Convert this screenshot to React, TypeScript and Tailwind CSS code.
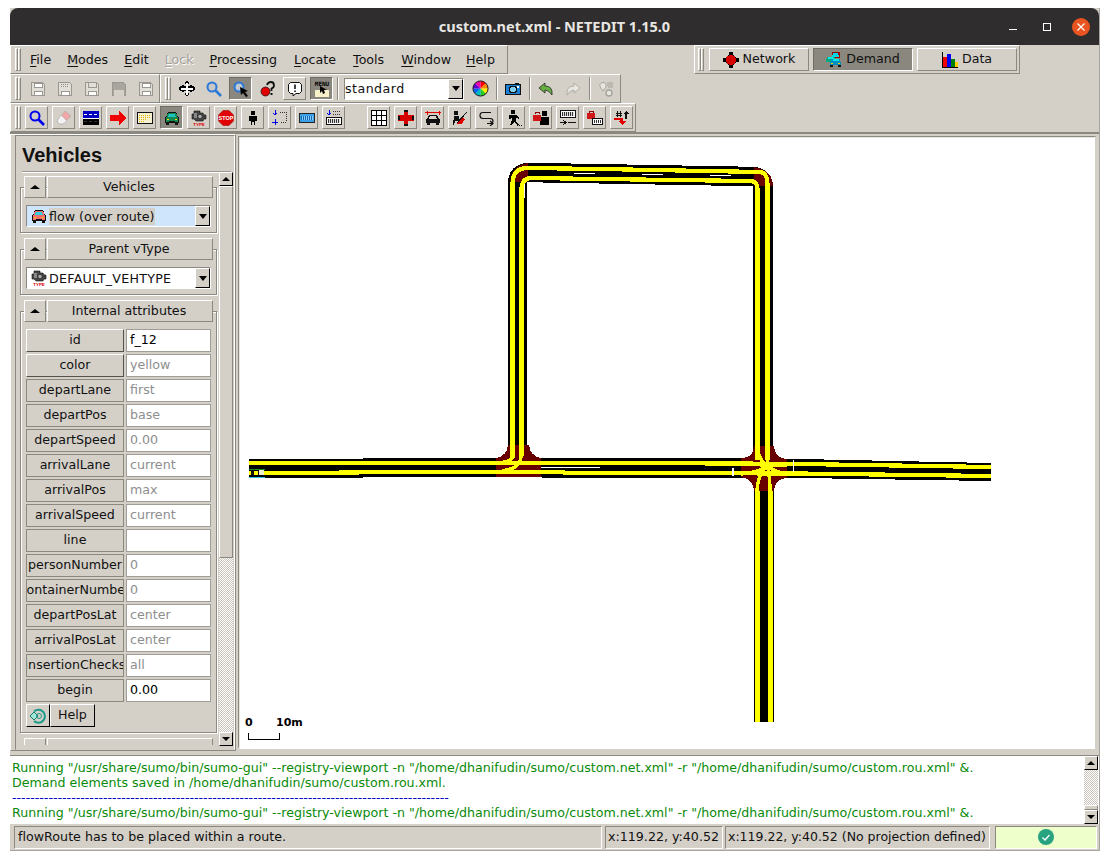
import React from "react";

const raised = "border border-t-white border-l-white border-b-[#8b8880] border-r-[#8b8880]";
const sunken = "border border-t-[#8b8880] border-l-[#8b8880] border-b-white border-r-white";

function Ico({ children }: { children: React.ReactNode }) {
  return (
    <svg viewBox="0 0 16 16" width={16} height={16} shapeRendering="crispEdges" className="block shrink-0">
      {children}
    </svg>
  );
}

function Grip({ className = "" }: { className?: string }) {
  return (
    <div className={`flex h-[23px] w-[6px] shrink-0 gap-0 ${className}`}>
      <div className={`w-[3px] ${raised}`} />
      <div className={`w-[3px] ${raised}`} />
    </div>
  );
}

function Btn({ children, pressed, flat, className = "" }: { children: React.ReactNode; pressed?: boolean; flat?: boolean; className?: string }) {
  const look = pressed
    ? "border border-t-[#6f6c66] border-l-[#6f6c66] border-b-white border-r-white bg-[#8a877f]"
    : flat
      ? "border border-transparent"
      : raised;
  return <div className={`flex h-[23px] w-[23px] shrink-0 items-center justify-center ${look} ${className}`}>{children}</div>;
}

function Sep({ className = "" }: { className?: string }) {
  return <div className={`h-[23px] w-[2px] shrink-0 border-l border-l-[#8b8880] border-r border-r-white ${className}`} />;
}

function Floppy({ v }: { v: number }) {
  return (
    <Ico>
      <path d="M1.5 1.5h11l2 2v11h-13z" fill={v === 3 ? "#a9a69f" : "#e2dfd8"} stroke="#9a9790" />
      {v === 0 || v === 4 ? <rect x="4" y="2" width="8" height="4" fill="#fff" stroke="#9a9790" /> : null}
      {v === 1 ? <path d="M4 3h8M4 5h8" stroke="#8f8c85" strokeDasharray="1 1" /> : null}
      {v === 2 ? <path d="M4 2v4h8V2" fill="none" stroke="#9a9790" /> : null}
      {v === 3 ? <rect x="3" y="9" width="10" height="6" fill="#d4d0c8" /> : <rect x="4" y="10" width="8" height="4" fill="#fff" stroke="#9a9790" />}
    </Ico>
  );
}

function Glass({ stroke = "#0000f0", lens = "none", w = 2 }: { stroke?: string; lens?: string; w?: number }) {
  return (
    <svg viewBox="0 0 16 16" width={16} height={16} className="block shrink-0">
      <circle cx="6" cy="6" r="4.5" fill={lens} stroke={stroke} strokeWidth={w} />
      <path d="M9.5 9.5 15 15" stroke={stroke} strokeWidth={w + 0.7} />
    </svg>
  );
}

function Car({ body = "#108a50", glass = "#20c0c0" }: { body?: string; glass?: string }) {
  return (
    <Ico>
      <path d="M4 2h8l2 5h1v6h-1v2h-3v-2H5v2H2v-2H1V7h1z" fill="#111" />
      <path d="M4 3h8l2 5v4H2V8z" fill={body} />
      <path d="M5 4h6l1 3H4z" fill={glass} />
      <rect x="3" y="9" width="2" height="1" fill="#ffd000" />
      <rect x="11" y="9" width="2" height="1" fill="#ffd000" />
      <rect x="5" y="11" width="6" height="1" fill="#111" />
    </Ico>
  );
}

function Engine() {
  return (
    <svg viewBox="0 0 16 16" width={16} height={16} className="block shrink-0">
      <path d="M3 1h6v2h3l1 2h2v4h-2l-1 2H5L3 9H1V4h2z" fill="#444" stroke="#111" strokeWidth=".6" />
      <circle cx="9" cy="6.5" r="2.2" fill="#aaa" stroke="#111" strokeWidth=".6" />
      <rect x="3" y="3" width="3" height="5" fill="#888" />
      <text x="8" y="16" textAnchor="middle" fontSize="4.4" fontWeight="700" fill="#e00000" fontFamily="Liberation Sans">TYPE</text>
    </svg>
  );
}

function RedCross() {
  return (
    <Ico>
      <path d="M6 0h4v5h6v6h-6v5H6v-5H0V5h6z" fill="#d40000" />
      <path d="M6 0h4v2H6zM6 14h4v2H6zM0 6h2v4H0zM14 6h2v4h-2z" fill="#111" />
    </Ico>
  );
}

function Person({ color = "#000" }: { color?: string }) {
  return (
    <Ico>
      <rect x="6" y="1" width="4" height="4" fill={color} />
      <path d="M4 6h8v5h-2v4H9v-3H7v3H6v-4H4z" fill={color} />
    </Ico>
  );
}

function Wheel() {
  const cols = ["#ff0000", "#ff8800", "#ffee00", "#22cc22", "#00bbbb", "#0066ff", "#6600cc", "#ee00aa"];
  return (
    <svg viewBox="0 0 18 18" width={17} height={17} className="block">
      {cols.map((c, i) => {
        const a = (i * Math.PI) / 4 - Math.PI / 2;
        const b = ((i + 1) * Math.PI) / 4 - Math.PI / 2;
        return (
          <path
            key={c}
            d={`M9 9 L${9 + 8 * Math.cos(a)} ${9 + 8 * Math.sin(a)} A8 8 0 0 1 ${9 + 8 * Math.cos(b)} ${9 + 8 * Math.sin(b)} Z`}
            fill={c}
          />
        );
      })}
      <circle cx="9" cy="9" r="8" fill="none" stroke="#111" />
    </svg>
  );
}

function Combo({ w, text, icon, field = "bg-white", textBg = "" }: { w: string; text: string; icon?: React.ReactNode; field?: string; textBg?: string }) {
  return (
    <div className={`flex h-[22px] items-center ${sunken} ${field} ${w}`}>
      {icon ? <div className="ml-[4px] mr-[2px]">{icon}</div> : null}
      <span className={`whitespace-nowrap leading-[17px] ${textBg}`}>{text}</span>
      <div className="ml-auto flex h-[20px] w-[15px] items-center justify-center border border-t-white border-l-white border-b-black border-r-black bg-[#d4d0c8]">
        <div className="h-0 w-0 border-x-[4px] border-t-[5px] border-x-transparent border-t-black" />
      </div>
    </div>
  );
}

function ArrowBtn({ up, className = "" }: { up?: boolean; className?: string }) {
  return (
    <div className={`flex h-[14px] w-[14px] shrink-0 items-center justify-center border border-t-white border-l-white border-b-black border-r-black bg-[#d4d0c8] ${className}`}>
      <div className={`h-0 w-0 border-x-[4px] border-x-transparent ${up ? "border-b-[4px] border-b-black" : "border-t-[4px] border-t-black"}`} />
    </div>
  );
}

function Module({ title, children, clipped }: { title: string; children?: React.ReactNode; clipped?: boolean }) {
  return (
    <div className="w-[197px]">
      <div className="relative z-10 mx-[4px] flex h-[22px]">
        <div className={`flex h-[22px] w-[22px] items-center justify-center bg-[#d4d0c8] ${raised}`}>
          <div className="h-0 w-0 border-x-[5px] border-b-[4px] border-x-transparent border-b-black" />
        </div>
        <div className={`ml-px flex h-[22px] w-[166px] items-center justify-center bg-[#d4d0c8] pr-[2px] ${raised}`}>{title}</div>
      </div>
      {clipped ? null : (
        <div className="-mt-[11px] border border-[#8b8880] bg-[#d4d0c8] px-[5px] pb-[5px] pt-[17px] shadow-[1px_1px_0_#fff,inset_1px_1px_0_#fff]">{children}</div>
      )}
    </div>
  );
}

function AttrRow({ label, value, active, raisedLabel }: { label: string; value: string; active?: boolean; raisedLabel?: boolean }) {
  return (
    <div className="flex h-[23px] gap-[2px]">
      <div
        className={`flex h-[23px] w-[98px] items-center justify-center overflow-hidden whitespace-nowrap border ${
          raisedLabel ? "border-t-white border-l-white border-b-[#55534e] border-r-[#55534e]" : "border-[#8b8880]"
        }`}
      >
        <span className="shrink-0">{label}</span>
      </div>
      <div className={`flex h-[23px] w-[85px] items-center border border-[#a09d96] bg-white px-[3px] ${active ? "text-black" : "text-[#8e8e8e]"}`}>{value}</div>
    </div>
  );
}

function Scroll({ thumbTop, thumbH, h, className = "" }: { thumbTop: number; thumbH: string; h: string; className?: string }) {
  return (
    <div className={`flex shrink-0 flex-col ${h} ${className}`}>
      <ArrowBtn up />
      <div className="flex min-h-0 flex-1 flex-col bg-[repeating-conic-gradient(#ffffff_0_25%,#c8c4bc_0_50%)] bg-[length:2px_2px]">
        <div style={{ height: thumbTop }} />
        <div className={`${thumbH} bg-[#d4d0c8] ${raised}`} />
      </div>
      <ArrowBtn />
    </div>
  );
}

function Roads() {
  const Y = "#ffff00";
  const R = "#680000";
  return (
    <svg viewBox="240 138 854 610" width={854} height={610} className="block bg-white" shapeRendering="crispEdges">
      <polygon points="249,459 480,458 740,458 800,459 991,463 991,481 800,478 603,478 480,477 249,478" fill="#000" />
      <path d="M517.5 460V184Q517.5 172.5 529 172.5L752 176.5Q763 176.5 763 188V460" fill="none" stroke="#000" strokeWidth="19.5" />
      <rect x="754" y="478" width="20" height="244" fill="#000" />
      <path d="M510 184Q510 166 528 163V182H510Z" fill={R} />
      <path d="M754 167Q773 170 773 186H754Z" fill={R} />
      <path d="M496 477H541V458Q530 456 529 445H508Q507 456 496 458Z" fill={R} />
      <path d="M754 446H774Q775 458 787 459V478Q775 479 774 491H754Q753 479 741 477V458Q753 458 754 446Z" fill={R} />
      <g fill="none" stroke={Y} strokeWidth="4.2">
        <path d="M249 463H555L740 463.5 800 464 991 467" />
        <path d="M249 473H300L400 472H558L570 473 800 473.5 991 476" />
        <path d="M512.5 458V184Q512.5 168 528 168L600 169 760 172Q767.5 172 767.5 186V460" />
        <path d="M521.5 456V189Q521.5 178 532 178L600 179 750 181Q757.5 181 757.5 189V460" />
        <path d="M757.5 491V722M770.5 491V722" />
      </g>
      <g fill="none" stroke={Y} strokeWidth="3.4">
        <path d="M513 456Q512 462 497 463" />
        <path d="M521 456Q521 466 510 469T497 473" />
        <path d="M757 446Q759 462 769 467" />
        <path d="M767 446Q767 458 768 468" />
        <path d="M741 463Q758 463 768 467" />
        <path d="M741 474Q760 472 769 465" />
        <path d="M787 465Q774 465 766 467" />
        <path d="M787 474Q774 472 766 465" />
        <path d="M757 491Q757 476 768 464" />
        <path d="M770 491Q770 476 767 464" />
      </g>
      <g fill="#fff">
        <rect x="541" y="467" width="59" height="1" />
        <rect x="574" y="173" width="21" height="1" />
        <rect x="642" y="174" width="21" height="1" />
        <rect x="710" y="175" width="21" height="1" />
        <rect x="524" y="184" width="1" height="14" />
        <rect x="732" y="468" width="2" height="8" />
        <rect x="793" y="460" width="1" height="12" />
      </g>
      <rect x="249" y="469" width="16" height="1" fill="#1a8a1a" />
      <rect x="251" y="470" width="3" height="5" fill="#111" />
      <rect x="258" y="470" width="1" height="5" fill="#111" />
      <rect x="259" y="470" width="5" height="5" fill="#f0f0d0" />
      <rect x="249" y="477" width="16" height="1" fill="#30c0e0" />
      <g fill="#000" fontFamily="DejaVu Sans" fontSize="11" fontWeight="700" shapeRendering="auto">
        <text x="245" y="726">0</text>
        <text x="276" y="726">10m</text>
      </g>
      <path d="M248.5 733V739.5H279.5V733" fill="none" stroke="#000" />
    </svg>
  );
}

const attrs: [string, string, boolean?, boolean?][] = [
  ["id", "f_12", true, true],
  ["color", "yellow", false, true],
  ["departLane", "first"],
  ["departPos", "base"],
  ["departSpeed", "0.00"],
  ["arrivalLane", "current"],
  ["arrivalPos", "max"],
  ["arrivalSpeed", "current"],
  ["line", "", true],
  ["personNumber", "0"],
  ["containerNumber", "0"],
  ["departPosLat", "center"],
  ["arrivalPosLat", "center"],
  ["insertionChecks", "all"],
  ["begin", "0.00", true],
];

const menus: [string, string, string, boolean?][] = [
  ["F", "ile", "ml-[9px]"],
  ["M", "odes", "ml-[16px]"],
  ["E", "dit", "ml-[16px]"],
  ["L", "ock", "ml-[16px] text-[#a5a29b] [text-shadow:1px_1px_0_#fff]", true],
  ["P", "rocessing", "ml-[16px]"],
  ["L", "ocate", "ml-[17px]"],
  ["T", "ools", "ml-[17px]"],
  ["W", "indow", "ml-[17px]"],
  ["H", "elp", "ml-[15px]"],
];

export default function App() {
  return (
    <div className="h-[861px] w-[1109px] overflow-hidden bg-white pl-[10px] pt-[8px] font-['DejaVu_Sans',sans-serif] text-[12.65px] leading-none text-[#111]">
      <div className="flex h-[843px] w-[1090px] flex-col border-r border-r-[#a8a59e] border-b border-b-[#a8a59e] bg-[#d4d0c8]">
        <div className="grid h-[37px] shrink-0 grid-cols-[120px_1fr_120px] items-center rounded-t-[8px] bg-[#2f2d2d]">
          <div />
          <div className="text-center font-['Noto_Sans',sans-serif] text-[14.5px] font-bold text-[#e8e6e3]">custom.net.xml - NETEDIT 1.15.0</div>
          <div className="flex items-center justify-end pr-[9px]">
            <div className="mt-[6px] h-px w-[8px] bg-white" />
            <div className="ml-[26px] h-[8px] w-[8px] border border-white" />
            <div className="ml-[21px] flex h-[18px] w-[18px] items-center justify-center rounded-full bg-[#e95420]">
              <svg viewBox="0 0 10 10" width={10} height={10}>
                <path d="M1.5 1.5l7 7M8.5 1.5l-7 7" stroke="#fff" strokeWidth="1.2" />
              </svg>
            </div>
          </div>
        </div>

        {/* menu + supermodes */}
        <div className="flex h-[29px] shrink-0">
          <div className={`flex h-[29px] w-[498px] items-center pl-[4px] ${raised}`}>
            <Grip />
            {menus.map(([u, rest, ml]) => (
              <span key={rest} className={`${ml} pt-[2px]`}>
                <span className="underline underline-offset-2">{u}</span>
                {rest}
              </span>
            ))}
          </div>
          <div className={`ml-[186px] flex h-[29px] w-[326px] items-center gap-[4px] pl-[3px] ${raised}`}>
            <Grip className="mr-[1px]" />
            <div className={`flex h-[23px] w-[100px] items-center justify-center gap-[4px] ${raised}`}>
              <Ico><path d="M6 0h4v3h1v1h1v1h1v1h3v4h-3v1h-1v1h-1v1h-1v3H6v-3H5v-1H4v-1H3v-1H0V6h3V5h1V4h1V3h1z" fill="#000" /><circle cx="8" cy="8" r="5.2" fill="#d40000" /></Ico>
              <span>Network</span>
            </div>
            <div className="flex h-[23px] w-[100px] items-center justify-center gap-[4px] border border-t-[#6f6c66] border-l-[#6f6c66] border-b-white border-r-white bg-[#8a877f]">
              <Ico>
                <path d="M6 0h8v6H6z" fill="#900" />
                <path d="M7 1h5l1 4H6z" fill="#00d8e8" />
                <path d="M1 5h8l1 5H0z" fill="#00a880" />
                <path d="M2 5h5l1 2H2z" fill="#00e8e8" />
                <path d="M5 7h9l1 6H4z" fill="#0090c0" />
                <path d="M7 7h6v2H7z" fill="#00e8e8" />
                <rect x="4" y="13" width="3" height="2" fill="#111" />
                <rect x="12" y="13" width="3" height="2" fill="#111" />
                <rect x="5" y="11" width="2" height="1" fill="#ffd000" />
                <rect x="12" y="11" width="2" height="1" fill="#ffd000" />
              </Ico>
              <span>Demand</span>
            </div>
            <div className={`flex h-[23px] w-[100px] items-center justify-center gap-[4px] ${raised}`}>
              <Ico>
                <rect x="1" y="5" width="4" height="10" fill="#f00000" />
                <rect x="5" y="2" width="4" height="13" fill="#0000f0" />
                <rect x="9" y="7" width="4" height="8" fill="#008000" />
                <rect x="13" y="10" width="3" height="5" fill="#ffd000" />
                <path d="M.5 0v15.5H16" fill="none" stroke="#000" />
              </Ico>
              <span>Data</span>
            </div>
          </div>
        </div>

        {/* toolbar row */}
        <div className="flex h-[29px] shrink-0">
          <div className={`flex h-[29px] w-[150px] items-center pl-[4px] ${raised}`}>
            <Grip />
            <div className="ml-[5px] flex gap-[4px]">
              {[0, 1, 2, 3, 4].map((v) => (
                <Btn key={v} flat>
                  <Floppy v={v} />
                </Btn>
              ))}
            </div>
          </div>
          <div className={`flex h-[29px] w-[461px] items-center pl-[4px] ${raised}`}>
            <Grip />
            <div className="ml-[4px] flex gap-[4px]">
              <Btn flat>
                <Ico>
                  <path d="M6 1h1V0h2v1h1v2H9v2h2V4h2v1h2v1h1v3h-1v1h-2v1h-2v-1H9v2h1v2H9v1H7v-1H6v-2h1v-2H5v1H3v-1H1V9H0V6h1V5h2V4h2v1h2V3H6z" fill="#000" />
                  <path d="M7 2h2v5h5v2H9v5H7V9H2V7h5z" fill="#fff" />
                </Ico>
              </Btn>
              <Btn flat>
                <Glass stroke="#2a78d8" lens="#c8c8c8" />
              </Btn>
              <Btn pressed>
                <svg viewBox="0 0 16 16" width={16} height={16} className="block">
                  <circle cx="6" cy="6" r="4.5" fill="#c0c8d0" stroke="#2a78d8" strokeWidth="2" />
                  <path d="M7 6l8 4-3 1 3 4-2 1-3-4-2 2z" fill="#000" />
                </svg>
              </Btn>
              <Btn flat>
                <svg viewBox="0 0 16 16" width={16} height={16} className="block">
                  <circle cx="5.5" cy="10.5" r="4.5" fill="#e00000" stroke="#111" strokeWidth=".7" />
                  <path d="M7 4Q8 1 11 1T14 4.5Q14 6.5 11.5 7.5V10" fill="none" stroke="#111" strokeWidth="1.8" />
                  <rect x="10.5" y="12" width="2" height="2" fill="#111" />
                </svg>
              </Btn>
              <Btn>
                <svg viewBox="0 0 16 16" width={16} height={16} className="block">
                  <path d="M3.500 1.500h9l2 2v7l-2 2H9l-3 2.500v-2.500H3.500l-2-2v-7z" fill="#fff" stroke="#111" />
                  <path d="M8 3.500v4.500M8 9.500v1.500" stroke="#111" strokeWidth="1.600" />
                </svg>
              </Btn>
              <Btn pressed>
                <svg viewBox="0 0 18 18" width={18} height={18} className="block">
                  <text x="9" y="6" textAnchor="middle" fontSize="6" fontWeight="700" fill="#000" fontFamily="DejaVu Sans Mono">MENU</text>
                  <rect x="2" y="10" width="14" height="7" fill="#f8f0c8" />
                  <path d="M7 6l0 7 2-2 1 3 2-1-1-3h3z" fill="#000" />
                </svg>
              </Btn>
            </div>
            <Sep className="ml-[4px]" />
            <div className="ml-[5px]">
              <Combo w="w-[120px]" text="standard" textBg="tracking-[0.45px]" />
            </div>
            <div className="flex h-[23px] w-[32px] items-center justify-center">
              <Wheel />
            </div>
            <Sep />
            <div className="ml-[3px] flex">
              <Btn flat>
                <Ico>
                  <path d="M0 3h9l1-1h3l1 1h2v11H0z" fill="#111" />
                  <path d="M1 4h14v9H1z" fill="#1c7fd6" />
                  <circle cx="8" cy="8.500" r="3.500" fill="#7fd0f0" stroke="#111" />
                  <rect x="12" y="5" width="2" height="2" fill="#fff" />
                </Ico>
              </Btn>
            </div>
            <Sep className="ml-[5px]" />
            <div className="ml-[3px] flex gap-[4px]">
              <Btn flat>
                <svg viewBox="0 0 16 16" width={16} height={16} className="block">
                  <path d="M7 2 1 7l6 5V9Q11 9 14 14 15 5 7 5z" fill="#66b042" stroke="#222" strokeWidth=".8" />
                </svg>
              </Btn>
              <Btn flat>
                <svg viewBox="0 0 16 16" width={16} height={16} className="block">
                  <path d="M9 2l6 5-6 5V9Q5 9 2 14 1 5 9 5z" fill="#e8e6e0" stroke="#a5a29b" strokeWidth=".8" />
                </svg>
              </Btn>
            </div>
            <Sep className="ml-[5px]" />
            <div className="ml-[3px]">
              <Btn flat>
                <svg viewBox="0 0 16 16" width={16} height={16} className="block">
                  <path d="M5 10Q1 5 2 3.500T5 1.500 8 3.500 5 10z" fill="#e8e6e0" stroke="#a5a29b" />
                  <path d="M9 2h6M9 4h6M10 6h5" stroke="#a5a29b" />
                  <circle cx="11" cy="12" r="3" fill="#e8e6e0" stroke="#a5a29b" strokeWidth="1.400" />
                </svg>
              </Btn>
            </div>
          </div>
        </div>

        {/* toolbar row 2 */}
        <div className="flex h-[29px] shrink-0">
          <div className={`flex h-[29px] w-[626px] items-center pl-[4px] ${raised}`}>
            <Grip />
            <div className="ml-[4px] flex gap-[4px]">
              <Btn><Glass /></Btn>
              <Btn>
                <svg viewBox="0 0 16 16" width={16} height={16} className="block">
                  <path d="M9 1l6 5-8 8H3L1 11z" fill="#f0a8a8" stroke="#aaa" strokeWidth=".6" />
                  <path d="M5 5l6 6-4 3H3l-2-3z" fill="#f2f2f2" stroke="#aaa" strokeWidth=".6" />
                </svg>
              </Btn>
              <Btn>
                <Ico>
                  <rect y="1" width="16" height="7" fill="#0000c0" />
                  <rect y="8" width="16" height="7" fill="#000" />
                  <path d="M1 4.500h3M6 4.500h3M11 4.500h3" stroke="#fff" />
                  <path d="M0 8.500h16" stroke="#fff" />
                  <path d="M1 11.500h3M6 11.500h3M11 11.500h3" stroke="#333" />
                </Ico>
              </Btn>
              <Btn>
                <Ico>
                  <path d="M0 5h9V1l7 7-7 7v-4H0z" fill="#f00000" />
                </Ico>
              </Btn>
              <Btn>
                <Ico>
                  <rect x=".5" y="2.500" width="15" height="11" fill="#f4f0d0" stroke="#111" />
                  <path d="M2 5h12M2 7h12M2 9h8M2 11h5" stroke="#e0b800" strokeDasharray="1 1" />
                </Ico>
              </Btn>
              <Btn pressed><Car /></Btn>
              <Btn><Engine /></Btn>
              <Btn>
                <svg viewBox="0 0 16 16" width={16} height={16} className="block">
                  <path d="M5 .5h6L15.500 5v6L11 15.500H5L.5 11V5z" fill="#e00000" stroke="#800" strokeWidth=".5" />
                  <text x="8" y="10" textAnchor="middle" fontSize="5.500" fontWeight="700" fill="#fff" fontFamily="Liberation Sans">STOP</text>
                </svg>
              </Btn>
              <Btn><Person /></Btn>
              <Btn>
                <Ico>
                  <path d="M3 0v5M1 3l2 2 2-2M3 9v6M6 12H0" stroke="#0000e0" fill="none" />
                  <path d="M8 2h6v10H8" stroke="#333" fill="none" strokeDasharray="1 1" />
                </Ico>
              </Btn>
              <Btn>
                <Ico>
                  <rect x=".5" y="3.500" width="15" height="9" fill="#3aa0e8" stroke="#222" />
                  <path d="M2 6h12v4H2z" fill="#1068b0" />
                  <path d="M3 6v4M5 6v4M7 6v4M9 6v4M11 6v4M13 6v4" stroke="#88ccff" />
                </Ico>
              </Btn>
              <Btn>
                <Ico>
                  <path d="M3 0v5M1 3l2 2 2-2" stroke="#0000e0" fill="none" />
                  <path d="M7 1h8M7 4h8" stroke="#333" strokeDasharray="1 1" />
                  <rect x=".5" y="7.500" width="15" height="7" fill="#fff" stroke="#111" />
                  <path d="M2 9h12v4H2z" fill="#333" />
                  <path d="M3 9v4M5 9v4M7 9v4M9 9v4M11 9v4M13 9v4" stroke="#ddd" />
                </Ico>
              </Btn>
            </div>
            <div className="ml-[22px] flex gap-[4px]">
              <Btn>
                <Ico>
                  <path d="M.5 .5h15v15H.5zM5.500 .5v15M10.500 .5v15M.5 5.500h15M.5 10.500h15" fill="#fff" stroke="#000" />
                </Ico>
              </Btn>
              <Btn><RedCross /></Btn>
              <Btn>
                <Ico>
                  <path d="M0 2.500h16M2 .5v4M14 .5v4" stroke="#e00000" />
                  <path d="M4 5h8l2 4h1v4h-1v2h-3v-2H5v2H2v-2H1V9h1z" fill="#111" />
                  <path d="M5 6h6l1 3H4z" fill="#d8d4cc" />
                </Ico>
              </Btn>
              <Btn>
                <Ico>
                  <circle cx="4" cy="3" r="2.500" fill="#111" />
                  <path d="M2 6h5l1 5H3l-1 4H1z" fill="#111" />
                  <path d="M5 13 15 2" stroke="#111" />
                  <path d="M5 14l5-6 3 1-3 5z" fill="#e00000" />
                </Ico>
              </Btn>
              <Btn>
                <svg viewBox="0 0 16 16" width={16} height={16} className="block">
                  <path d="M12 2.500H4Q1 2.500 1 5.500T4 8.500H11Q14 8.500 14 11T11 13.500H8M11 11l3 2.500-3 2.500" fill="none" stroke="#111" strokeWidth="1.200" />
                </svg>
              </Btn>
              <Btn>
                <Ico>
                  <rect x="5" y="0" width="4" height="4" fill="#000" />
                  <path d="M3 5h7l3 3v1l-3-1v3l3 4h-2L8 12l-2 3H4l2-5V7L4 9H3z" fill="#000" />
                  <path d="M11 15h1M13 15h1M15 15h1" stroke="#000" />
                </Ico>
              </Btn>
              <Btn>
                <Ico>
                  <rect x="9" y="1" width="5" height="5" fill="#000" />
                  <path d="M7 7h9v8H7z" fill="#000" />
                  <path d="M2 4V2h4v2" fill="none" stroke="#800" />
                  <rect x="0" y="5" width="8" height="6" fill="#d01818" />
                </Ico>
              </Btn>
              <Btn>
                <Ico>
                  <rect x=".5" y=".5" width="15" height="7" fill="#fff" stroke="#111" />
                  <path d="M2 2h12v4H2z" fill="#333" />
                  <path d="M3 2v4M5 2v4M7 2v4M9 2v4M11 2v4M13 2v4" stroke="#ddd" />
                  <path d="M0 12.500h5M3 10l3 2.500L3 15M8 12.500h8" stroke="#111" fill="none" />
                </Ico>
              </Btn>
              <Btn>
                <Ico>
                  <path d="M2 3V1h4v2" fill="none" stroke="#800" />
                  <rect x="0" y="3" width="8" height="6" fill="#d01818" />
                  <rect x="5.500" y="8.500" width="10" height="6" fill="#fff" stroke="#111" />
                  <path d="M7 10v3M9 10v3M11 10v3M13 10v3" stroke="#333" />
                </Ico>
              </Btn>
              <Btn>
                <Ico>
                  <path d="M2 3h6M2 5h6M3 1v6M6 1v6" stroke="#111" />
                  <path d="M12 1l3 3h-2v5h-2V4H9z" fill="#111" />
                  <path d="M0 8h9v3h3l-4 4-4-4h2V10H0z" fill="#e00000" />
                </Ico>
              </Btn>
            </div>
          </div>
        </div>

        {/* main */}
        <div className="flex h-[619px] shrink-0 border-t-2 border-t-[#8b8880]">
          <div className={`flex h-[617px] w-[226px] shrink-0 flex-col pl-[4px] ${raised}`}>
            <div className="flex h-full flex-col border border-[#8b8880] border-b-transparent border-r-white pl-[6px] pr-[3px]">
              <div className="flex h-[36px] shrink-0 items-center border-b border-b-[#9a978f] pt-[2px] font-['Liberation_Sans',sans-serif] text-[20px] font-bold shadow-[0_1px_0_#fff]">
                Vehicles
              </div>
              <div className="flex min-h-0 flex-1">
                <div className="-ml-[2px] flex h-[573px] w-[198px] shrink-0 flex-col gap-[5px] overflow-hidden pt-[4px]">
                  <Module title="Vehicles">
                    <Combo
                      w="w-[185px]"
                      field="bg-[#cfe5fb]"
                      textBg="bg-[#d4d0c8]"
                      text="flow (over route)"
                      icon={<Car body="#f07070" glass="#30d0e0" />}
                    />
                  </Module>
                  <Module title="Parent vType">
                    <Combo w="w-[185px]" text="DEFAULT_VEHTYPE" textBg="tracking-[0.27px]" icon={<Engine />} />
                  </Module>
                  <Module title="Internal attributes">
                    <div className="flex flex-col gap-[2px]">
                      {attrs.map(([l, v, a, r]) => (
                        <AttrRow key={l} label={l} value={v} active={a} raisedLabel={r} />
                      ))}
                      <div className="flex h-[23px]">
                        <div className="flex h-[23px] w-[24px] items-center justify-center border border-t-white border-l-white border-b-black border-r-black">
                          <svg viewBox="0 0 18 18" width={18} height={18} className="block">
                            <path d="M5 4.500A6.500 6.500 0 1 1 5 14" fill="none" stroke="#1a9a8a" strokeWidth="2" />
                            <path d="M1 9l4-4 4 4-4 4z" fill="#9fe8d8" stroke="#1a7a6a" />
                            <circle cx="10" cy="9" r="2.500" fill="none" stroke="#1a9a8a" />
                          </svg>
                        </div>
                        <div className="flex h-[23px] w-[45px] items-center justify-center border border-t-white border-l-white border-b-black border-r-black">Help</div>
                      </div>
                    </div>
                  </Module>
                  <Module title="" clipped />
                </div>
                <Scroll thumbTop={0} thumbH="h-[372px]" h="h-[574px]" className="ml-[1px]" />
              </div>
            </div>
          </div>
          <div className="ml-[2px] mt-[2px] h-[612px] border border-[#d4d0c8] border-t-[#8b8880] border-l-[#8b8880]">
            <div className="border border-white border-l-[#e8e6e0] border-t-[#e8e6e0]">
              <Roads />
            </div>
          </div>
        </div>

        {/* messages */}
        <div className="ml-0 mt-[4px] flex h-[69px] w-[1089px] shrink-0 border-t border-t-[#8b8880] bg-white pl-[2px]">
          <div className="min-w-0 flex-1 whitespace-pre pt-[4px] text-[12.62px] leading-[15px] text-[#088a08]">
            <div>Running "/usr/share/sumo/bin/sumo-gui" --registry-viewport -n "/home/dhanifudin/sumo/custom.net.xml" -r "/home/dhanifudin/sumo/custom.rou.xml" &amp;.</div>
            <div>Demand elements saved in /home/dhanifudin/sumo/custom.rou.xml.</div>
            <div className="text-[#0000c8]">------------------------------------------------------------------------------------------------</div>
            <div>Running "/usr/share/sumo/bin/sumo-gui" --registry-viewport -n "/home/dhanifudin/sumo/custom.net.xml" -r "/home/dhanifudin/sumo/custom.rou.xml" &amp;.</div>
          </div>
          <Scroll thumbTop={43} thumbH="h-[6px]" h="h-[68px]" className="mr-[1px]" />
        </div>

        {/* status bar */}
        <div className="flex min-h-0 flex-1 items-center gap-[2px] pl-[4px] whitespace-nowrap">
          <div className={`flex h-[23px] w-[588px] items-center pl-[3px] tracking-[0.02px] ${sunken}`}>flowRoute has to be placed within a route.</div>
          <div className={`ml-[1px] flex h-[23px] w-[118px] items-center pl-[2px] ${sunken}`}>x:119.22, y:40.52</div>
          <div className={`flex h-[23px] w-[265px] items-center pl-[2px] text-[12.5px] ${sunken}`}>x:119.22, y:40.52 (No projection defined)</div>
          <div className={`ml-[3px] flex h-[23px] w-[102px] items-center justify-center bg-[#eeffcc] ${sunken}`}>
            <svg viewBox="0 0 16 16" width={16} height={16} className="block">
              <circle cx="8" cy="8" r="8" fill="#27a37f" />
              <path d="M4.500 8.500 7 11l4.500-5" fill="none" stroke="#fff" strokeWidth="1.300" />
            </svg>
          </div>
        </div>
      </div>
    </div>
  );
}
